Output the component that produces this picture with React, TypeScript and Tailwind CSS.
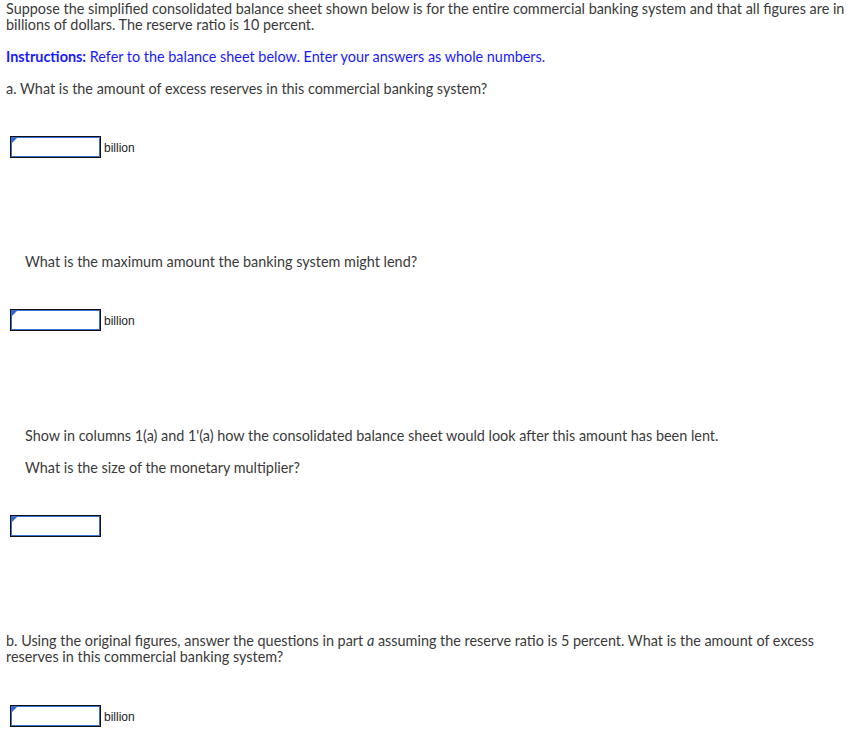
const AnswerBox = ({ unit }: { unit?: string }) => (
  <div className="flex items-center ml-[4px]">
    <div className="relative w-[91px] h-[22px] border border-[#111] bg-white">
      <div className="absolute inset-0 border border-[#3b6fd4]"></div>
      <div className="absolute left-[1px] top-[1px] w-0 h-0 border-t-[5px] border-r-[5px] border-t-[#2f67d8] border-r-transparent"></div>
    </div>
    {unit && (
      <span className="ml-[3px] pt-[2px] text-[12px] text-[#222] font-['Liberation_Sans',Arial,sans-serif]">
        {unit}
      </span>
    )}
  </div>
);

const App = () => {
  return (
    <div className="min-h-screen bg-white pt-[1px] pl-[6px] pr-[10px] text-[14.4px] leading-[16px] text-[#3a3a3a] font-['Lato',sans-serif]">
      {/* Intro */}
      <p>
        Suppose the simplified consolidated balance sheet shown below is for the entire commercial banking system and
        that all figures are in billions of dollars. The reserve ratio is 10 percent.
      </p>
      <p className="mt-[16px] text-[#1a1aff]">
        <span className="font-bold">Instructions:</span> Refer to the balance sheet below. Enter your answers as whole
        numbers.
      </p>

      {/* Part a */}
      <p className="mt-[16px]">a. What is the amount of excess reserves in this commercial banking system?</p>
      <div className="mt-[39px]">
        <AnswerBox unit="billion" />
      </div>

      <p className="mt-[96px] pl-[19px]">What is the maximum amount the banking system might lend?</p>
      <div className="mt-[39px]">
        <AnswerBox unit="billion" />
      </div>

      <p className="mt-[97px] pl-[19px]">
        Show in columns 1(a) and 1'(a) how the consolidated balance sheet would look after this amount has been lent.
      </p>
      <p className="mt-[16px] pl-[19px]">What is the size of the monetary multiplier?</p>
      <div className="mt-[39px]">
        <AnswerBox />
      </div>

      {/* Part b */}
      <p className="mt-[96px]">
        b. Using the original figures, answer the questions in part <i>a</i> assuming the reserve ratio is 5 percent.
        What is the amount of excess reserves in this commercial banking system?
      </p>
      <div className="mt-[40px]">
        <AnswerBox unit="billion" />
      </div>
    </div>
  );
};

export default App;
